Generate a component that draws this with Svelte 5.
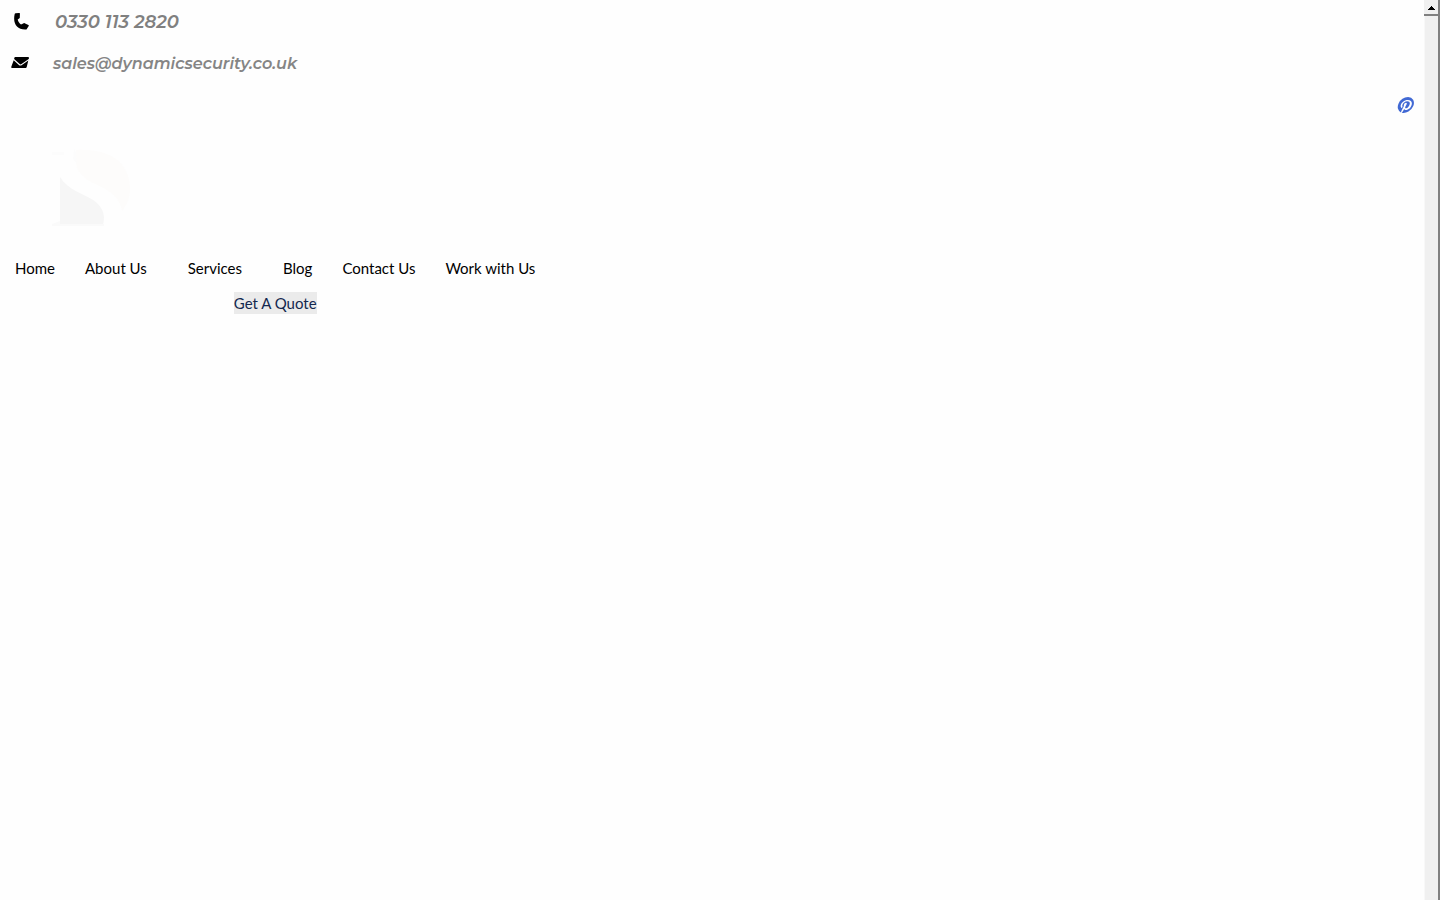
<script>
  const links = [
    { label: 'Home', href: '#home' },
    { label: 'About Us', href: '#about', submenu: true },
    { label: 'Services', href: '#services', submenu: true },
    { label: 'Blog', href: '#blog' },
    { label: 'Contact Us', href: '#contact' },
    { label: 'Work with Us', href: '#work' }
  ];
</script>

<div class="window">
  <div class="page">
    <header>
      <address>
        <a class="contact phone" href="tel:03301132820">
          <svg viewBox="0 0 18 18" aria-hidden="true">
            <path d="M4.600.2 8 0c.5-.1.900.1.900.6L8.800 4.500c0 .4-.1.600-.4.800L6.700 6.500c.4 2.100 1.600 3.900 3.300 4.900l2.700-1.200c.3-.2.600-.2.900 0l3.800 1.900c.4.300.5.600.3 1l-1.900 2.900c-.2.400-.6.600-1 .5C6 16.900 1.500 10.500 3.700 1c.1-.4.400-.700.9-.8z" />
          </svg>
          <span>0330 113 2820</span>
        </a>
        <a class="contact email" href="mailto:sales@dynamicsecurity.co.uk">
          <svg viewBox="0 0 18 18" aria-hidden="true">
            <path d="M4.300 2h12.500c.9 0 1.300.6 1.100 1.400l-.2.6-7.200 5.100c-.7.500-1.300.500-1.800 0L3.100 4l.2-.9c.1-.700.500-1.100 1-1.100z" />
            <path d="M2.700 5.200 7.900 10c.8.7 2 .7 3 0l6.400-4.600-1.500 6.300c-.2.900-.7 1.300-1.500 1.300H1.400c-.9 0-1.300-.5-1.100-1.300z" />
          </svg>
          <span>sales@dynamicsecurity.co.uk</span>
        </a>
      </address>

      <div class="social">
        <a href="#pinterest" aria-label="Pinterest">
          <svg viewBox="0 0 18 18" aria-hidden="true">
            <g transform="translate(2.400 0) skewX(-15)">
              <path d="M9 1a8 8 0 0 0-3 15.400c0-.6 0-1.400.2-2.100l1-4.300s-.3-.5-.3-1.200c0-1.200.7-2 1.500-2 .7 0 1.100.5 1.100 1.200 0 .7-.5 1.800-.7 2.800-.2.800.4 1.500 1.200 1.500 1.500 0 2.500-1.900 2.500-4.100 0-1.700-1.200-3-3.200-3-2.400 0-3.900 1.800-3.900 3.800 0 .700.2 1.200.5 1.600.2.200.2.200.1.500l-.2.600c0 .2-.2.300-.4.200-1.100-.4-1.600-1.700-1.600-3 0-2.300 1.900-5 5.700-5 3.100 0 5.100 2.200 5.100 4.600 0 3.200-1.700 5.500-4.300 5.500-.9 0-1.700-.5-2-1l-.6 2.100c-.2.600-.5 1.200-.8 1.700A8 8 0 1 0 9 1z" />
            </g>
          </svg>
        </a>
      </div>

      <a class="logo" href="#home" aria-label="Dynamic Security">
        <svg viewBox="0 0 90 84" aria-hidden="true">
          <path fill="#fdfcfb" d="M26 2c33-2 54 12 54 39 0 9-3 16-8 22-2-15-15-22-29-28-10-5-17-13-17-21z" />
          <path fill="#fcfcfc" d="M2 4h12v3H2zM24 1l-1 10 4 5-1-12z" />
          <path fill="#f6f6f6" d="M10 29c8 13 22 16 33 23 9 6 13 14 10 25H10z" />
          <path fill="#fafafa" d="M2 76l8-3v3h44v2H2z" />
        </svg>
      </a>

      <nav>
        <ul>
          {#each links as link}
            <li class:submenu={link.submenu}><a href={link.href}>{link.label}</a></li>
          {/each}
        </ul>
        <a class="quote" href="#quote">Get A Quote</a>
      </nav>
    </header>
  </div>

  <div class="scrollbar">
    <button type="button" aria-label="Scroll up">
      <svg viewBox="0 0 16 16" aria-hidden="true"><path d="M7 6h1v1h1v1h1v1h1v1H4V9h1V8h1V7h1z" /></svg>
    </button>
    <div class="thumb"></div>
  </div>
</div>

<style>
  :global(body) {
    margin: 0;
    background: #fefefe;
  }

  .window {
    display: flex;
    min-height: 100vh;
    font-family: Lato, sans-serif;
    font-size: 15px;
    line-height: 22px;
  }

  .page {
    flex: 1;
    min-width: 0;
  }

  a {
    color: #000;
    text-decoration: none;
  }

  svg {
    display: block;
  }

  address {
    display: flex;
    flex-direction: column;
    align-items: flex-start;
    gap: 20px;
    padding: 11px 11px 9px;
    font-family: Montserrat, Inter, sans-serif;
    font-weight: 600;
    font-style: italic;
  }

  .contact {
    display: flex;
    align-items: center;
    gap: 24px;
    color: #858585;
    font-size: 16px;
  }

  .contact svg {
    width: 18px;
    height: 18px;
    fill: #000;
  }

  .phone {
    gap: 26px;
    color: #808080;
    font-size: 18px;
  }

  .social {
    display: flex;
    justify-content: flex-end;
    padding: 12px 9px;
  }

  .social svg {
    width: 18px;
    height: 18px;
    fill: #4169d4;
  }

  .logo {
    display: block;
    width: 90px;
    margin: 22px 50px 19px;
  }

  nav {
    display: flex;
    flex-direction: column;
    align-items: center;
    gap: 7px;
    width: fit-content;
  }

  ul {
    display: flex;
    margin: 0;
    padding: 0;
    list-style: none;
  }

  li {
    padding: 6px 15px;
  }

  .submenu {
    padding-right: 26px;
  }

  .quote {
    background: #ebebeb;
    color: #14284f;
  }

  .scrollbar {
    display: flex;
    flex-direction: column;
    box-sizing: border-box;
    width: 16px;
    background: #f0f0f0;
    border-right: 2px solid #808080;
  }

  .scrollbar button {
    height: 16px;
    padding: 0;
    border: 0;
    border-bottom: 2px solid #808080;
    background: #f0f0f0;
  }

  .scrollbar svg {
    width: 16px;
    height: 16px;
  }

  .thumb {
    flex: 1;
    border-left: 1px solid #f8f8f8;
  }
</style>
